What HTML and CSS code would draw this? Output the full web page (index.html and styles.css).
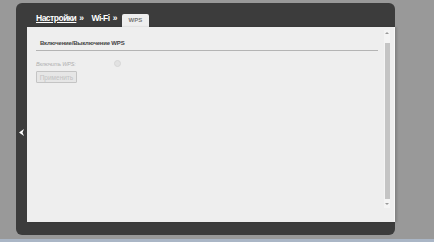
FILE: index.html
```html
<!DOCTYPE html>
<html lang="ru">
<head>
    <meta charset="UTF-8">
    <title>WPS</title>
    <link rel="stylesheet" href="styles.css">
</head>
<body>
    <div class="frame">
        <div class="topbar">
            <div class="crumbs">
                <a href="#" class="crumb">Настройки</a><span class="sep">»</span>
                <span class="crumb plain">Wi-Fi</span><span class="sep">»</span>
            </div>
            <div class="tab">WPS</div>
        </div>
        <div class="body">
            <div class="gutter">
                <svg class="back" width="5" height="7" viewBox="0 0 5 7"><polygon points="5,0 0,3.5 5,7 3.5,3.5" fill="#fff"/></svg>
            </div>
            <div class="window">
                <div class="content">
                    <div class="section-title">Включение/Выключение WPS</div>
                    <div class="row">
                        <span class="label">Включить WPS:</span>
                        <span class="check"></span>
                    </div>
                    <button class="apply" disabled>Применить</button>
                </div>
                <div class="scrollbar">
                    <div class="arrow up"></div>
                    <div class="track"><div class="thumb"></div></div>
                    <div class="arrow down"></div>
                </div>
            </div>
        </div>
    </div>
    <div class="strip"></div>
</body>
</html>
```

FILE: styles.css
```css
html, body {
    margin: 0;
    height: 100%;
}
body {
    background-color: #999;
    font-family: "Liberation Sans", Arial, sans-serif;
    padding-top: 3px;
    box-sizing: border-box;
    position: relative;
    overflow: hidden;
}
.frame {
    margin-left: 16px;
    width: 379px;
    height: 232px;
    background-color: #3c3c3c;
    border-radius: 6px;
    display: flex;
    flex-direction: column;
}
.topbar {
    height: 24px;
    display: flex;
    align-items: flex-end;
    padding-left: 20px;
}
.crumbs {
    color: #fff;
    font-weight: bold;
    font-size: 8.5px;
    letter-spacing: -0.5px;
    padding-bottom: 4px;
}
.crumb {
    color: #fff;
    text-decoration: underline;
}
.crumb.plain {
    text-decoration: none;
    margin-left: 6px;
}
.sep {
    margin-left: 3px;
}
.tab {
    margin-left: 5px;
    width: 27px;
    height: 13px;
    background-color: #eee;
    border-radius: 2px 2px 0 0;
    color: #777;
    font-size: 6px;
    font-weight: bold;
    text-align: center;
    line-height: 13px;
}
.body {
    display: flex;
    flex: 1;
}
.gutter {
    width: 11px;
    padding-top: 102px;
    padding-left: 3px;
    box-sizing: border-box;
}
.back {
    display: block;
}
.window {
    width: 370px;
    height: 195px;
    background-color: #eee;
    border-right: 1px solid #f8f8f8;
    box-shadow: 2px 0 2px rgba(0,0,0,0.15);
    display: flex;
}
.content {
    flex: 1;
    padding: 13px 6px 0 9px;
}
.section-title {
    font-size: 6px;
    font-weight: bold;
    letter-spacing: -0.2px;
    color: #444;
    padding: 0 0 4px 4px;
    border-bottom: 1px solid #b4b4b4;
}
.row {
    display: flex;
    align-items: center;
    margin-top: 9px;
}
.label {
    font-size: 5.5px;
    font-style: italic;
    letter-spacing: -0.2px;
    color: #b0b0b0;
    width: 78px;
}
.check {
    width: 5px;
    height: 5px;
    border-radius: 50%;
    background-color: #e2e2e2;
    border: 1px solid #d6d6d6;
}
.apply {
    display: block;
    margin-top: 4px;
    width: 41px;
    height: 12px;
    padding: 0;
    font-family: inherit;
    font-size: 6.5px;
    color: #c2c2c2;
    background-color: #e6e6e6;
    border: 1px solid #c4c4c4;
    border-radius: 1px;
}
.scrollbar {
    width: 6px;
    margin: 3px 4px 14px 0;
    background-color: #f4f4f4;
    display: flex;
    flex-direction: column;
}
.arrow {
    height: 7px;
    position: relative;
}
.arrow::after {
    content: "";
    position: absolute;
    left: 1px;
    top: 2px;
    border-left: 2px solid transparent;
    border-right: 2px solid transparent;
}
.arrow.up::after {
    border-bottom: 2px solid #999;
}
.arrow.down::after {
    border-top: 2px solid #999;
}
.track {
    flex: 1;
    padding: 6px 0 2px 1px;
    display: flex;
}
.thumb {
    flex: 1;
    background-color: #c4c4c4;
}
.strip {
    position: absolute;
    left: 0;
    right: 0;
    bottom: 0;
    height: 3px;
    background-color: #aab6c6;
}
```
